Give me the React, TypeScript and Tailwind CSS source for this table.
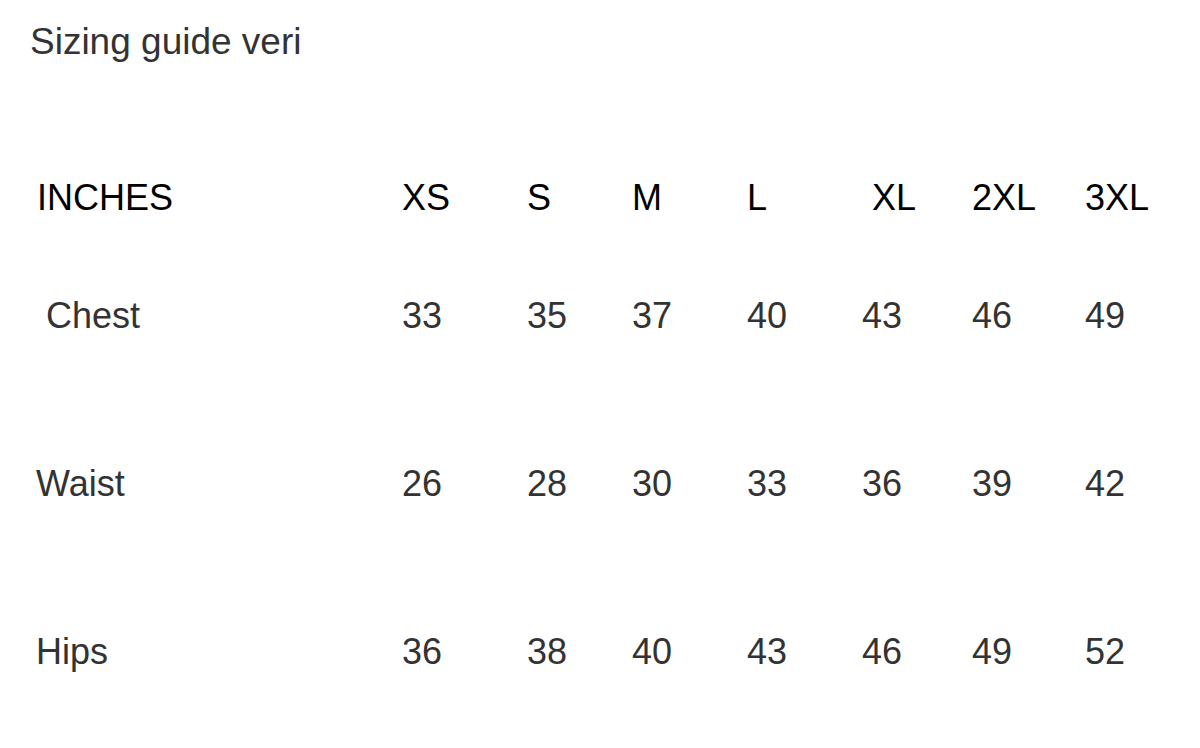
const sizes = ["XS", "S", "M", "L", " XL", "2XL", "3XL"];

const rows = [
  { label: " Chest", values: [33, 35, 37, 40, 43, 46, 49], gap: "mt-[78px]" },
  { label: "Waist", values: [26, 28, 30, 33, 36, 39, 42], gap: "mt-[128px]" },
  { label: "Hips", values: [36, 38, 40, 43, 46, 49, 52], gap: "mt-[128px]" },
];

const cols = "grid grid-cols-[365px_125px_105px_115px_115px_110px_113px_1fr] h-[40px] items-center";

const App = () => {
  return (
    <div className="w-[1200px] h-[748px] bg-white font-['Liberation_Sans',Arial,sans-serif] text-[36px] leading-[40px] whitespace-pre">
      <h1 className="pl-[30px] pt-[22px] text-[#333] font-normal text-[37px]">Sizing guide veri</h1>
      <div className="pl-[37px] mt-[116px]">
        <div className={cols + " text-black"}>
          <span>INCHES</span>
          {sizes.map((s) => (
            <span key={s}>{s}</span>
          ))}
        </div>
        {rows.map((r) => (
          <div key={r.label} className={cols + " text-[#333] " + r.gap}>
            <span className="-ml-px">{r.label}</span>
            {r.values.map((v, i) => (
              <span key={i}>{v}</span>
            ))}
          </div>
        ))}
      </div>
    </div>
  );
};

export default App;
